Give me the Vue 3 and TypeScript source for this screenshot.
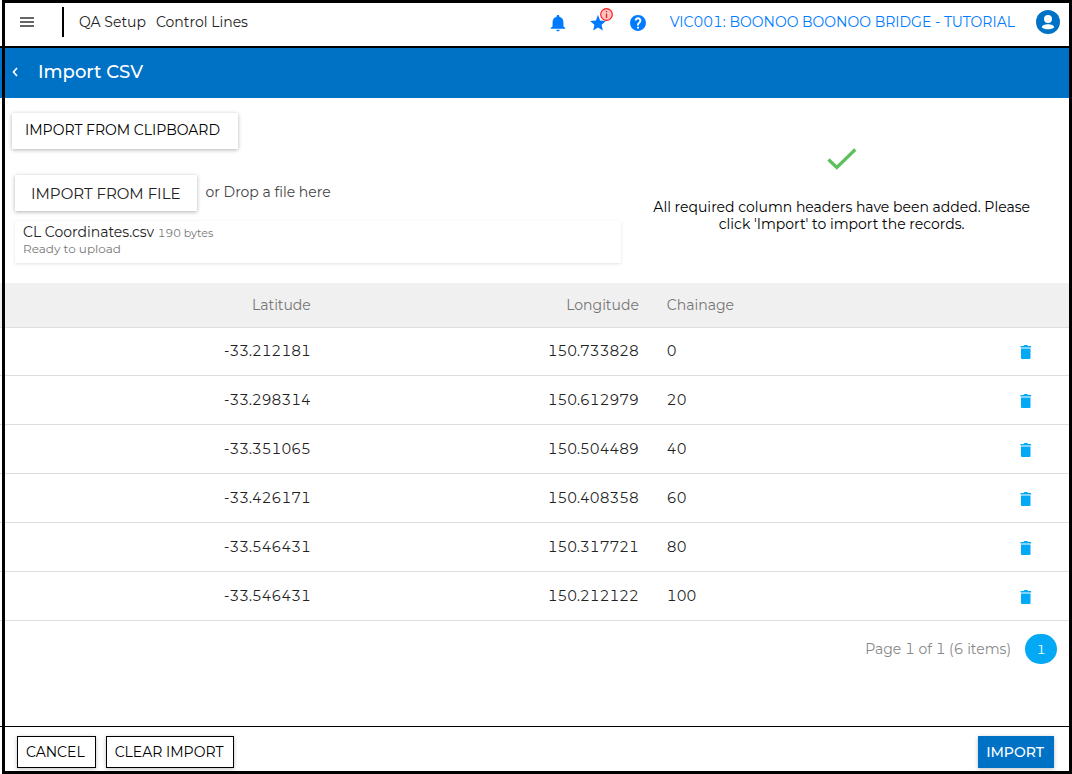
<script setup lang="ts">
interface CoordinateRow {
  id: number
  latitude: string
  longitude: string
  chainage: number
}

const rows: CoordinateRow[] = [
  { id: 1, latitude: '-33.212181', longitude: '150.733828', chainage: 0 },
  { id: 2, latitude: '-33.298314', longitude: '150.612979', chainage: 20 },
  { id: 3, latitude: '-33.351065', longitude: '150.504489', chainage: 40 },
  { id: 4, latitude: '-33.426171', longitude: '150.408358', chainage: 60 },
  { id: 5, latitude: '-33.546431', longitude: '150.317721', chainage: 80 },
  { id: 6, latitude: '-33.546431', longitude: '150.212122', chainage: 100 },
]
</script>

<template>
  <div class="page">
    <header class="topbar">
      <button class="icon-btn menu" aria-label="Menu">
        <svg width="14" height="10" viewBox="0 0 14 10"><path d="M0 1h14M0 5h14M0 9h14" stroke="#333" stroke-width="1.3" /></svg>
      </button>
      <span class="divider"></span>
      <nav class="crumbs">
        <a href="#">QA Setup</a>
        <a href="#">Control Lines</a>
      </nav>
      <div class="tools">
        <button class="icon-btn" aria-label="Notifications">
          <svg width="20" height="20" viewBox="0 0 24 24"><path fill="#007bff" d="M12 22c1.1 0 2-.9 2-2h-4c0 1.1.89 2 2 2zm6.500-6v-5c0-3.400-1.900-5.900-4.900-6.500V4c0-.83-.67-1.500-1.600-1.500s-1.600.67-1.600 1.500v.5C7.400 5.100 5.500 7.600 5.500 11v5L3.300 18v1h17.400v-1z" /></svg>
        </button>
        <button class="icon-btn star" aria-label="What's new">
          <svg width="20" height="20" viewBox="0 0 24 24"><path fill="#007bff" d="M12 17.27 17.800 21l-1.500-7.030L21.500 9.500l-7-.6L12 2 9.500 8.900l-7 .6 5.200 4.470L6.200 21z" /></svg>
          <svg class="badge" width="13" height="13" viewBox="0 0 13 13"><circle cx="6.5" cy="6.5" r="5.8" fill="#ffc4c4" stroke="#ff1a1a" stroke-width="1.2" /><path d="M6.5 3v1.2M6.5 5.4V10" stroke="#e02020" stroke-width="1.3" /></svg>
        </button>
        <button class="icon-btn" aria-label="Help">
          <svg width="20" height="20" viewBox="0 0 24 24"><path fill="#007bff" d="M12 2.500C6.700 2.500 2.500 6.700 2.500 12s4.200 9.500 9.500 9.500 9.500-4.200 9.500-9.500S17.300 2.500 12 2.500zm1.200 16.200h-2.400v-2.300h2.400v2.300zm2.070-7.450-.9.92C13.45 12.900 13.200 13.500 13.200 15h-2.400v-.5c0-1.100.4-2.100 1.120-2.830l1.240-1.260c.37-.36.49-.86.49-1.310 0-.9-.75-1.650-1.650-1.650s-1.650.75-1.650 1.650H8c0-2.210 1.790-4 4-4s4 1.790 4 4c0 .88-.16 1.580-.73 2.150z" /></svg>
        </button>
      </div>
      <a class="project" href="#">VIC001: BOONOO BOONOO BRIDGE - TUTORIAL</a>
      <button class="icon-btn" aria-label="Account">
        <svg width="24" height="24" viewBox="0 0 24 24"><circle cx="12" cy="12" r="12" fill="#0072c6" /><circle cx="12" cy="9" r="4" fill="#fff" /><path fill="#fff" d="M12 14.2c-3 0-6.2 1.3-6.2 3 1.4 1.4 3.5 2 6.200 2s4.800-.6 6.200-2c0-1.700-3.200-3-6.200-3z" /></svg>
      </button>
    </header>

    <div class="titlebar">
      <button class="icon-btn" aria-label="Back">
        <svg width="6" height="10" viewBox="0 0 6 10"><path d="M5 1 1.500 5 5 9" fill="none" stroke="#fff" stroke-width="1.700" /></svg>
      </button>
      <h1>Import CSV</h1>
    </div>

    <main>
      <section class="import">
        <div class="sources">
          <button class="raised clipboard">IMPORT FROM CLIPBOARD</button>
          <div class="uploader">
            <div class="pick">
              <button class="raised file">IMPORT FROM FILE</button>
              <span>or Drop a file here</span>
            </div>
            <div class="file-card">
              <div><span class="name">CL Coordinates.csv</span> <small>190 bytes</small></div>
              <div class="state">Ready to upload</div>
            </div>
          </div>
        </div>
        <div class="status">
          <svg width="30" height="22" viewBox="0 0 30 22"><path d="M1.500 11.500 9.800 19.500 28.300 1.500" fill="none" stroke="#5cc05c" stroke-width="3.200" /></svg>
          <p>All required column headers have been added. Please click 'Import' to import the records.</p>
        </div>
      </section>

      <table>
        <colgroup><col class="c-lat" /><col class="c-lon" /><col /><col class="c-act" /></colgroup>
        <thead>
          <tr><th class="num">Latitude</th><th class="num">Longitude</th><th>Chainage</th><th></th></tr>
        </thead>
        <tbody>
          <tr v-for="row in rows" :key="row.id">
            <td class="num">{{ row.latitude }}</td>
            <td class="num">{{ row.longitude }}</td>
            <td>{{ row.chainage }}</td>
            <td class="act">
              <button class="icon-btn" aria-label="Delete row">
                <svg width="12" height="14" viewBox="0 0 12 14"><path fill="#03a9f4" d="M1 3.600h9.500V13a1 1 0 0 1-1 1H2a1 1 0 0 1-1-1zM.5 1h3l.8-1h3l.8 1h3v1.500H.5z" /></svg>
              </button>
            </td>
          </tr>
        </tbody>
      </table>

      <div class="pager">
        <span>Page 1 of 1 (6 items)</span>
        <button class="page-no">1</button>
      </div>
    </main>

    <footer>
      <button class="outlined">CANCEL</button>
      <button class="outlined">CLEAR IMPORT</button>
      <button class="primary">IMPORT</button>
    </footer>
  </div>
</template>

<style>
body {
  margin: 0;
}
</style>

<style scoped>
.page {
  position: relative;
  display: flex;
  flex-direction: column;
  min-height: 100vh;
  box-sizing: border-box;
  padding-bottom: 3px;
  background: #fff;
  color: #222;
  font-family: Montserrat, Inter, "Open Sans", sans-serif;
  font-size: 14px;
  line-height: 17px;
  font-variant-numeric: tabular-nums;
}
.page::after {
  content: "";
  position: absolute;
  inset: 0 0 0 2px;
  border: 3px solid #000;
  pointer-events: none;
}
button {
  font: inherit;
  font-variant-numeric: inherit;
  color: inherit;
  border: 0;
  margin: 0;
  padding: 0;
  background: none;
  cursor: pointer;
  white-space: nowrap;
}
a {
  color: inherit;
  text-decoration: none;
}
.icon-btn {
  display: inline-flex;
}
.topbar {
  display: flex;
  align-items: center;
  height: 48px;
  box-sizing: border-box;
  padding: 0 12px 2px 20px;
  border-bottom: 2px solid #000;
}
.divider {
  width: 2px;
  height: 30px;
  margin: 0 15px 0 28px;
  background: #000;
}
.crumbs {
  display: flex;
  gap: 10px;
}
.tools {
  display: flex;
  gap: 20px;
  margin-left: auto;
  padding-top: 2px;
}
.star {
  position: relative;
}
.badge {
  position: absolute;
  top: -5px;
  right: -5px;
}
.project {
  margin: 0 21px 0 22px;
  color: #007bff;
}
.titlebar {
  display: flex;
  align-items: center;
  gap: 20px;
  height: 50px;
  box-sizing: border-box;
  padding: 0 12px 2px;
  background: #0072c6;
  color: #fff;
}
h1 {
  margin: 0;
  font-size: 18px;
  line-height: 24px;
  font-weight: 500;
}
main {
  flex: 1;
}
.import {
  display: grid;
  grid-template-columns: 7fr 5fr;
  padding: 15px 0 20px;
}
.raised {
  height: 36px;
  background: #fff;
  box-shadow: 0 1px 4px rgba(0, 0, 0, 0.3);
}
.clipboard {
  margin-left: 12px;
  padding: 0 18px 2px 13px;
  color: #000;
}
.uploader {
  padding: 26px 4px 0 15px;
}
.pick {
  display: flex;
  align-items: center;
  gap: 9px;
  color: #444;
}
.pick span {
  padding-bottom: 2px;
}
.file {
  padding: 0 16px;
  color: #222;
  font-size: 15px;
}
.file-card {
  height: 42px;
  box-sizing: border-box;
  margin-top: 10px;
  padding: 3px 8px;
  color: #777;
  line-height: 16px;
  box-shadow: 0 1px 3px rgba(0, 0, 0, 0.12);
}
.name {
  color: #222;
}
small {
  font-size: 11px;
}
.state {
  font-size: 12px;
}
.status {
  display: flex;
  flex-direction: column;
  align-items: center;
  padding: 35px 26px 0 12px;
  color: #000;
  text-align: center;
}
.status p {
  max-width: 392px;
  margin: 29px 0 0;
}
table {
  width: 100%;
  border-collapse: separate;
  border-spacing: 0;
  table-layout: fixed;
}
.c-lat {
  width: 30.3%;
}
.c-lon {
  width: 30.6%;
}
.c-act {
  width: 92px;
}
th,
td {
  box-sizing: border-box;
  height: 49px;
  padding: 0 14px;
  border-bottom: 1px solid #ddd;
  text-align: left;
  font-weight: 400;
}
th {
  height: 45px;
  background: #f0f0f0;
  color: #757575;
}
tbody tr:first-child td {
  height: 48px;
}
.num {
  text-align: right;
}
.act {
  text-align: center;
}
.act .icon-btn {
  vertical-align: middle;
}
.pager {
  display: flex;
  justify-content: flex-end;
  align-items: center;
  gap: 14px;
  padding: 13px 15px 0;
  color: #888;
}
.page-no {
  width: 32px;
  height: 30px;
  border-radius: 16px;
  background: #03a9f4;
  color: #fff;
  font-size: 13px;
}
footer {
  display: flex;
  gap: 10px;
  padding: 9px 18px 3px 17px;
  border-top: 1px solid #000;
}
.outlined,
.primary {
  height: 32px;
  padding: 0 10px 0 8px;
  box-shadow: 0 1px 4px rgba(0, 0, 0, 0.25);
}
.outlined {
  border: 1px solid #000;
  background: #fff;
  color: #000;
}
.primary {
  margin-left: auto;
  background: #0072c6;
  color: #fff;
  font-weight: 500;
}
</style>
